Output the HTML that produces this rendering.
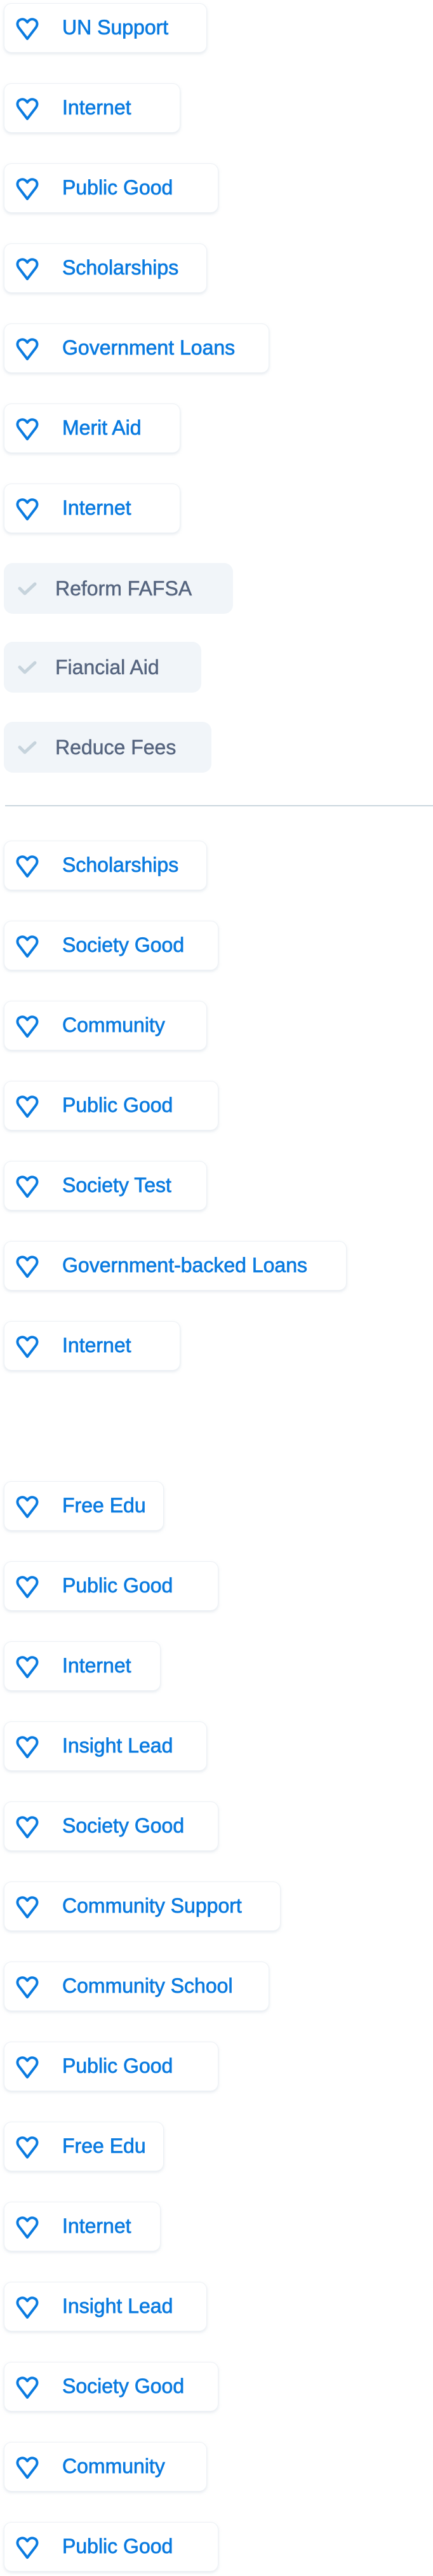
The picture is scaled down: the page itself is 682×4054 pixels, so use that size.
<!DOCTYPE html>
<html><head><meta charset="utf-8"><style>
html,body{margin:0;padding:0;background:#fff;width:682px;height:4054px;position:relative;overflow:hidden}
.c{position:absolute;left:6px;height:78px;box-sizing:border-box;border-radius:12px;background:#fff;border:1.5px solid #edf1f5;box-shadow:0 2px 5px rgba(180,195,210,.35);font-family:"Liberation Sans",sans-serif;font-weight:400;-webkit-text-stroke:0.7px #0a7be0;font-size:32px;color:#0a7be0;white-space:nowrap}
.c svg{position:absolute;left:17px;top:22px}
.c span{position:absolute;left:91px;top:19px;line-height:36px}
.g{position:absolute;left:6px;height:80px;box-sizing:border-box;border-radius:14px;background:#f1f5f9;font-family:"Liberation Sans",sans-serif;font-size:32px;-webkit-text-stroke:0.5px #56657f;color:#56657f;white-space:nowrap}
.g svg{position:absolute;left:22px;top:29px}
.g span{position:absolute;left:81px;top:22px;line-height:36px}
.hr{position:absolute;left:8px;right:0;top:1267px;height:2px;background:#cbd6de}
</style></head><body>
<div id="r"></div>
<div class="g" style="top:886px;width:361px"><svg width="30" height="22" viewBox="0 0 30 22"><path d="M3 11l8 8L27 4" fill="none" stroke="#c6d3dc" stroke-width="5" stroke-linecap="round" stroke-linejoin="round"/></svg><span>Reform FAFSA</span></div>
<div class="g" style="top:1010px;width:311px"><svg width="30" height="22" viewBox="0 0 30 22"><path d="M3 11l8 8L27 4" fill="none" stroke="#c6d3dc" stroke-width="5" stroke-linecap="round" stroke-linejoin="round"/></svg><span>Fiancial Aid</span></div>
<div class="g" style="top:1136px;width:327px"><svg width="30" height="22" viewBox="0 0 30 22"><path d="M3 11l8 8L27 4" fill="none" stroke="#c6d3dc" stroke-width="5" stroke-linecap="round" stroke-linejoin="round"/></svg><span>Reduce Fees</span></div>
<div class="hr"></div>
<script>
var H='<svg width="38" height="36" viewBox="0 0 38 36"><path d="M19 33L6 16C2 11 3 5 8 3c4-2 8 0 11 4c3-4 7-6 11-4c5 2 6 8 2 13z" fill="none" stroke="#0a7be0" stroke-width="4" stroke-linejoin="round"/></svg>';
var items=[
[5,"UN Support",326],[131,"Internet",284],[257,"Public Good",344],[383,"Scholarships",326],[509,"Government Loans",424],[635,"Merit Aid",284],[761,"Internet",284],
[1323,"Scholarships",326],[1449,"Society Good",344],[1575,"Community",326],[1701,"Public Good",344],[1827,"Society Test",326],[1953,"Government-backed Loans",546],[2079,"Internet",284]];
var t3=[["Free Edu",258],["Public Good",344],["Internet",253],["Insight Lead",326],["Society Good",344],["Community Support",442],["Community School",424],["Public Good",344],["Free Edu",258],["Internet",253],["Insight Lead",326],["Society Good",344],["Community",326],["Public Good",344]];
t3.forEach(function(a,i){items.push([2331+126*i,a[0],a[1]])});
var s='';items.forEach(function(a){s+='<div class="c" style="top:'+a[0]+'px;width:'+(a[2]-6)+'px">'+H+'<span>'+a[1]+'</span></div>'});
document.getElementById('r').innerHTML=s;
</script>
</body></html>
